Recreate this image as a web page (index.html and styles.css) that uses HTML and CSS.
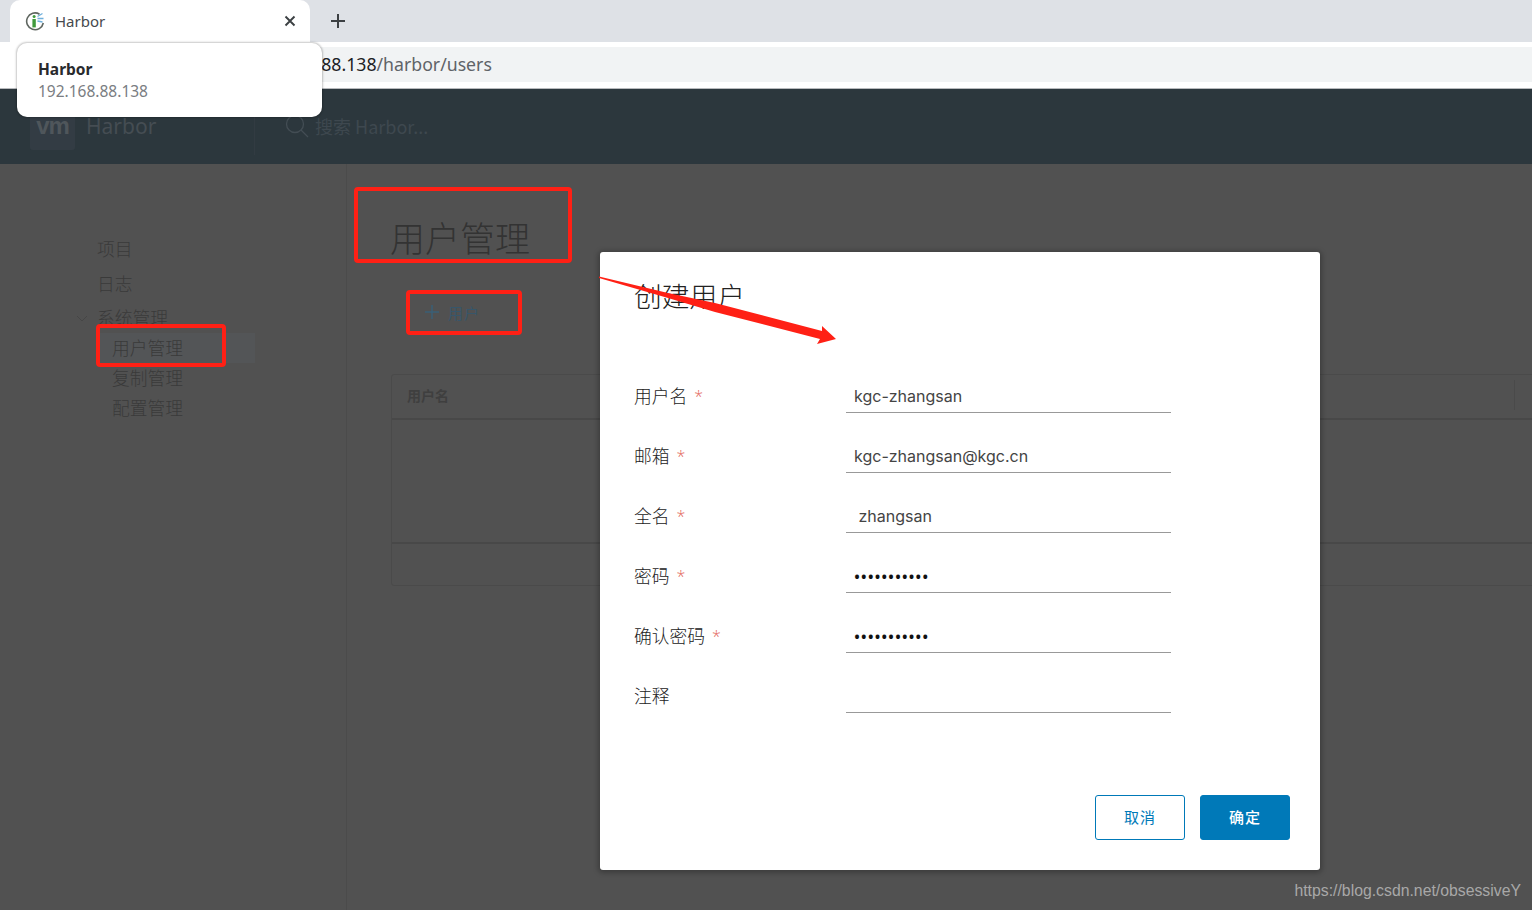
FILE: index.html

```html
<!DOCTYPE html>
<html lang="zh-CN">
<head>
    <meta charset="UTF-8">
    <title>Harbor</title>
    <link rel="stylesheet" href="styles.css">
</head>
<body>
    <div class="tabstrip">
        <div class="tab">
            <svg class="favicon" width="20" height="20" viewBox="0 0 20 20">
                <path d="M14.5 3.2A8.4 8.4 0 1 0 18.3 12" fill="none" stroke="#5f6660" stroke-width="1.6"/>
                <rect x="7.4" y="8" width="3.4" height="8.4" fill="#3f9a3c"/>
                <circle cx="9.1" cy="5.6" r="1.5" fill="#3f9a3c"/>
                <path d="M12.5 5.5l5-3M12.5 7.5h6M12.5 10l5 1" stroke="#6fb0dc" stroke-width="1.3" fill="none"/>
            </svg>
            <span class="tab-title">Harbor</span>
            <svg class="tab-close" width="12" height="12" viewBox="0 0 12 12">
                <path d="M1.5 1.5l9 9M10.5 1.5l-9 9" stroke="#3c4043" stroke-width="1.9"/>
            </svg>
        </div>
        <svg class="new-tab" width="16" height="16" viewBox="0 0 16 16">
            <path d="M8 1v14M1 8h14" stroke="#3c4043" stroke-width="2"/>
        </svg>
    </div>
    <div class="toolbar">
        <div class="urlbar"><span class="url-host">192.168.88.138</span>/harbor/users</div>
    </div>

    <header class="app-header">
        <div class="vm-logo">vm</div>
        <div class="app-name">Harbor</div>
        <div class="search">
            <svg width="24" height="24" viewBox="0 0 24 24">
                <circle cx="10" cy="10" r="8.5" fill="none" stroke="#434d54" stroke-width="1.3"/>
                <path d="M16 16l7 7" stroke="#434d54" stroke-width="1.3"/>
            </svg>
            <span>搜索 Harbor...</span>
        </div>
    </header>

    <div class="app-body">
        <nav class="sidebar">
            <div class="nav-item">项目</div>
            <div class="nav-item">日志</div>
            <div class="nav-item nav-group">
                <svg class="chevron" width="12" height="8" viewBox="0 0 12 8">
                    <path d="M1 1l5 5 5-5" fill="none" stroke="#464646" stroke-width="1"/>
                </svg>
                系统管理
            </div>
            <div class="nav-sub active">用户管理</div>
            <div class="nav-sub">复制管理</div>
            <div class="nav-sub">配置管理</div>
        </nav>
        <main class="content">
            <h1 class="page-title">用户管理</h1>
            <div class="add-user">
                <svg class="plus" width="16" height="16" viewBox="0 0 16 16">
                    <path d="M8 1v14M1 8h14" stroke="#3a5f76" stroke-width="1.5"/>
                </svg>
                <span>用户</span>
            </div>
            <div class="grid">
                <div class="grid-head"><span>用户名</span><i class="col-mark"></i></div>
                <div class="grid-body"></div>
                <div class="grid-foot"></div>
            </div>
        </main>
    </div>

    <div class="modal">
        <h3 class="modal-title">创建用户</h3>
        <form class="form">
            <div class="row"><label>用户名<em>*</em></label><input type="text" value="kgc-zhangsan"></div>
            <div class="row"><label>邮箱<em>*</em></label><input type="text" value="kgc-zhangsan@kgc.cn"></div>
            <div class="row"><label>全名<em>*</em></label><input type="text" value=" zhangsan"></div>
            <div class="row"><label>密码<em>*</em></label><input type="password" value="12345678901"></div>
            <div class="row"><label>确认密码<em>*</em></label><input type="password" value="12345678901"></div>
            <div class="row"><label>注释</label><input type="text" value=""></div>
        </form>
        <div class="modal-foot">
            <button type="button" class="btn btn-outline">取消</button>
            <button type="button" class="btn btn-primary">确定</button>
        </div>
    </div>

    <div class="tooltip">
        <div class="tooltip-title">Harbor</div>
        <div class="tooltip-url">192.168.88.138</div>
    </div>

    <div class="mark mark-title"></div>
    <div class="mark mark-add"></div>
    <div class="mark mark-nav"></div>
    <svg class="arrow" width="240" height="70" viewBox="598 276 240 70">
        <polygon points="599,276.5 668,293 715,303 822,331 822,326 836,339 817,344 820,339 715,312 668,298 599,278" fill="#ff2015"/>
    </svg>

    <div class="watermark">https://blog.csdn.net/obsessiveY</div>
</body>
</html>
```

FILE: styles.css

```css
* {
    box-sizing: border-box;
}
html, body {
    margin: 0;
    height: 100%;
}
body {
    position: relative;
    display: flex;
    flex-direction: column;
    height: 910px;
    overflow: hidden;
    background: #515151;
    font-family: "Noto Sans CJK SC", "Noto Sans", sans-serif;
}

/* browser chrome */
.tabstrip {
    display: flex;
    align-items: center;
    height: 42px;
    padding-left: 10px;
    background: #dee1e6;
}
.tab {
    display: flex;
    align-items: center;
    width: 300px;
    height: 42px;
    padding: 0 14px 0 15px;
    background: #fff;
    border-radius: 10px 10px 0 0;
}
.favicon {
    margin-right: 10px;
}
.tab-title {
    flex: 1;
    font-family: "Noto Sans", sans-serif;
    font-size: 15px;
    color: #45494d;
}
.new-tab {
    margin-left: 20px;
}
.toolbar {
    height: 47px;
    padding-top: 5px;
    background: #fff;
    border-bottom: 1px solid #b8babd;
}
.urlbar {
    height: 35px;
    line-height: 35px;
    margin-left: 200px;
    padding-left: 51px;
    background: #f1f3f4;
    font-family: "Noto Sans", sans-serif;
    font-size: 17.7px;
    color: #5f6368;
}
.url-host {
    color: #202124;
}

/* harbor header */
.app-header {
    display: flex;
    align-items: center;
    height: 75px;
    padding-left: 30px;
    background: #2c373d;
}
.vm-logo {
    width: 45px;
    height: 37px;
    margin-top: 10px;
    background: #333c44;
    border-radius: 3px;
    font-family: "Liberation Sans", sans-serif;
    font-size: 24px;
    font-weight: 700;
    line-height: 25px;
    text-align: center;
    letter-spacing: -1px;
    color: #4f565b;
}
.app-name {
    width: 169px;
    height: 47px;
    margin: 10px 0 0 11px;
    border-right: 1px solid #323b42;
    font-family: "Noto Sans", sans-serif;
    font-size: 21px;
    line-height: 37px;
    color: #454d53;
}
.search {
    display: flex;
    align-items: center;
    gap: 6px;
    margin: -2px 0 0 30px;
    font-size: 18px;
    color: #3e484f;
}

/* dimmed page */
.app-body {
    flex: 1;
    display: flex;
}
.sidebar {
    width: 347px;
    padding-top: 67px;
    border-right: 1px solid #4b4b4b;
    color: #3a3a3a;
    font-size: 17.75px;
    font-weight: 300;
}
.nav-item {
    position: relative;
    height: 35px;
    line-height: 35px;
    padding-left: 97px;
}
.nav-group {
    height: 32px;
    line-height: 32px;
}
.chevron {
    position: absolute;
    left: 76px;
    top: 14px;
}
.nav-sub {
    width: 156px;
    height: 30px;
    line-height: 28px;
    margin-left: 99px;
    padding-left: 13px;
}
.nav-sub.active {
    background: #535557;
}
.content {
    flex: 1;
    padding: 55px 0 0 44px;
    overflow: hidden;
}
.page-title {
    margin: 0 0 0 -1px;
    font-size: 35px;
    font-weight: 300;
    line-height: 36px;
    color: #333;
}
.add-user {
    display: flex;
    align-items: center;
    height: 36px;
    margin: 39px 0 0 33px;
    font-size: 15px;
    letter-spacing: 1px;
    color: #37566a;
}
.plus {
    flex: none;
    margin-right: 8px;
}
.grid {
    width: 1200px;
    margin-top: 44px;
    border: 1px solid #4a4a4a;
    border-radius: 3px;
}
.grid-head {
    display: flex;
    align-items: center;
    justify-content: space-between;
    height: 45px;
    padding: 0 0 4px 15px;
    border-bottom: 2px solid #484848;
    font-size: 14px;
    font-weight: 700;
    color: #3f3f3f;
}
.col-mark {
    width: 1px;
    height: 30px;
    margin-right: 75px;
    background: #4a4a4a;
}
.grid-body {
    height: 124px;
    border-bottom: 2px solid #484848;
}
.grid-foot {
    height: 41px;
}

/* modal */
.modal {
    position: absolute;
    left: 600px;
    top: 252px;
    width: 720px;
    height: 618px;
    padding: 26px 30px 0 34px;
    background: #fff;
    border-radius: 3px;
    box-shadow: 0 1px 5px 2px rgba(0,0,0,0.25);
}
.modal-title {
    margin: 0;
    height: 36px;
    font-size: 27.75px;
    font-weight: 300;
    line-height: 34px;
    color: #222;
}
.form {
    margin-top: 39px;
}
.row {
    display: flex;
    align-items: flex-end;
    height: 60px;
}
.row label {
    width: 212px;
    height: 37px;
    line-height: 39px;
    font-size: 17.75px;
    font-weight: 300;
    color: #222;
}
.row label em {
    margin-left: 7px;
    font-family: "Open Sans", sans-serif;
    font-style: normal;
    font-size: 16px;
    vertical-align: 1px;
    color: #e4695e;
}
.row input {
    width: 325px;
    height: 37px;
    padding: 3px 8px 0;
    border: 0;
    border-bottom: 1px solid #999;
    outline: none;
    font-family: Inter, sans-serif;
    font-size: 16px;
    color: #444;
    white-space: pre;
}
.row input[type="password"] {
    padding-top: 5px;
    font-family: "Open Sans", sans-serif;
    font-weight: 600;
    letter-spacing: 0.8px;
    color: #111;
}
.modal-foot {
    display: flex;
    justify-content: flex-end;
    gap: 15px;
    margin-top: 82px;
}
.btn {
    width: 90px;
    height: 45px;
    padding: 0 0 3px;
    border-radius: 3px;
    border: 1px solid #0079b8;
    font-family: "Noto Sans CJK SC", sans-serif;
    font-size: 15px;
    font-weight: 500;
    letter-spacing: 1px;
}
.btn-outline {
    background: #fff;
    font-weight: 400;
    color: #0079b8;
}
.btn-primary {
    background: #0079b8;
    color: #fff;
}

/* overlays */
.tooltip {
    position: absolute;
    left: 17px;
    top: 43px;
    width: 305px;
    height: 74px;
    padding: 15px 21px;
    background: #fff;
    border-radius: 10px;
    box-shadow: 0 0 2px 1px rgba(0,0,0,0.22);
    font-family: "Noto Sans", sans-serif;
    font-size: 15.5px;
    line-height: 22px;
}
.tooltip-title {
    font-weight: 700;
    color: #292a2d;
}
.tooltip-url {
    color: #7a7d82;
}
.mark {
    position: absolute;
    border: 4px solid #ff2015;
    border-radius: 4px;
}
.mark-title {
    left: 354px;
    top: 187px;
    width: 218px;
    height: 76px;
}
.mark-add {
    left: 406px;
    top: 290px;
    width: 116px;
    height: 45px;
}
.mark-nav {
    left: 96px;
    top: 324px;
    width: 130px;
    height: 43px;
}
.arrow {
    position: absolute;
    left: 598px;
    top: 276px;
}
.watermark {
    position: absolute;
    right: 11px;
    top: 882px;
    font-family: "Liberation Sans", sans-serif;
    font-size: 15.8px;
    color: #a8a8a8;
}
```
